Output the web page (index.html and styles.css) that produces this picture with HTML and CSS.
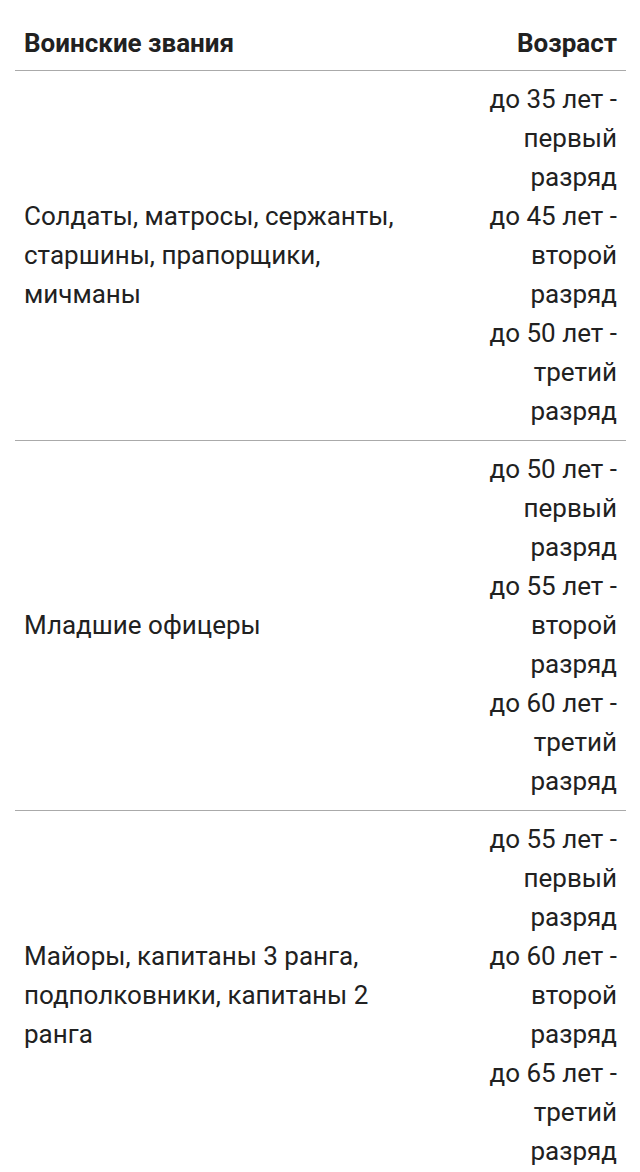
FILE: index.html
```html
<!DOCTYPE html>
<html lang="ru">
<head>
<meta charset="utf-8">
<link rel="stylesheet" href="styles.css">
</head>
<body>
<table class="ranks">
  <colgroup><col class="col-rank"><col class="col-age"></colgroup>
  <thead>
    <tr><th class="rank">Воинские звания</th><th class="age">Возраст</th></tr>
  </thead>
  <tbody>
    <tr>
      <td class="rank">Солдаты, матросы, сержанты, старшины, прапорщики, мичманы</td>
      <td class="age"><span class="item">до 35 лет - первый разряд</span><span class="item">до 45 лет - второй разряд</span><span class="item">до 50 лет - третий разряд</span></td>
    </tr>
    <tr>
      <td class="rank">Младшие офицеры</td>
      <td class="age"><span class="item">до 50 лет - первый разряд</span><span class="item">до 55 лет - второй разряд</span><span class="item">до 60 лет - третий разряд</span></td>
    </tr>
    <tr>
      <td class="rank">Майоры, капитаны 3 ранга, подполковники, капитаны 2 ранга</td>
      <td class="age"><span class="item">до 55 лет - первый разряд</span><span class="item">до 60 лет - второй разряд</span><span class="item">до 65 лет - третий разряд</span></td>
    </tr>
  </tbody>
</table>
</body>
</html>
```
FILE: styles.css
```css
html, body {
  margin: 0;
  padding: 0;
  background: #ffffff;
}
body {
  font-family: Roboto, "Noto Sans", sans-serif;
  font-size: 26px;
  line-height: 39px;
  color: #212121;
}
.ranks {
  table-layout: fixed;
  width: 611px;
  margin-left: 15px;
  border-collapse: collapse;
}
.col-rank { width: 418px; }
.col-age { width: 193px; }
.ranks th,
.ranks td {
  padding: 9px 9px;
  border-bottom: 1px solid #aaaaaa;
  vertical-align: middle;
}
.ranks th {
  font-weight: 700;
  padding-top: 24px;
  padding-bottom: 7px;
}
.ranks .rank { text-align: left; }
.ranks .age {
  text-align: right;
  padding-left: 40px;
}
.item { display: block; }
```
